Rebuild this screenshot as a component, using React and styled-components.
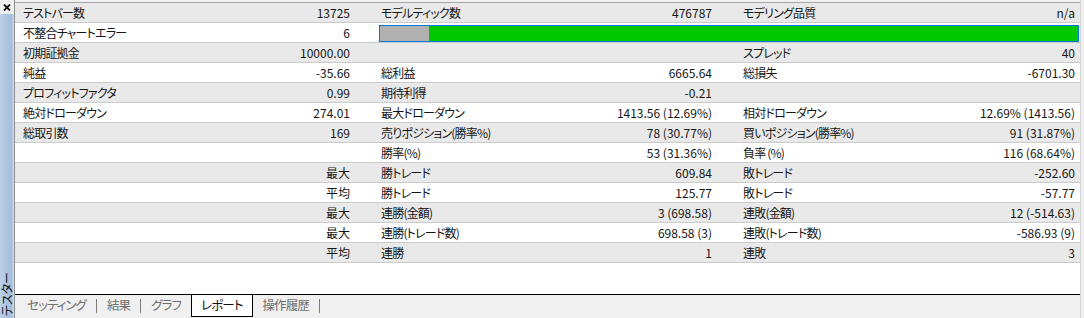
import React from 'react'
import styled, { createGlobalStyle } from 'styled-components'

const GlobalStyle = createGlobalStyle`
  html, body {
    margin: 0;
    padding: 0;
    background: #f0f0f0;
  }
  body {
    font-family: "Noto Sans CJK JP", "Noto Sans", sans-serif;
    font-size: 12px;
    color: #151515;
    font-feature-settings: "palt";
  }
`

const Frame = styled.div`
  display: flex;
  width: 1084px;
  height: 318px;
  overflow: hidden;
`

const Sidebar = styled.div`
  width: 15px;
  flex: none;
  display: flex;
  flex-direction: column;
  border-right: 1px solid #8c8c8c;
  box-sizing: border-box;
`

const CloseBox = styled.div`
  height: 14px;
  flex: none;
  display: flex;
  align-items: flex-start;
  padding: 4px 0 0 3px;
  box-sizing: border-box;
  background: #f0f0f0;
`

const SideStrip = styled.div`
  flex: 1;
  display: flex;
  flex-direction: column;
  justify-content: flex-end;
  align-items: center;
  background: linear-gradient(to right, #bcd0e8, #a3bddb 85%, #dbe6f2);
  padding-bottom: 2px;
`

const SideLabel = styled.span`
  writing-mode: vertical-rl;
  text-orientation: sideways;
  transform: rotate(180deg);
  font-size: 12px;
  line-height: 14px;
  color: #111;
`

const Main = styled.div`
  flex: none;
  width: 1066px;
  display: flex;
  flex-direction: column;
  padding-top: 2px;
  border-right: 1px solid #d6d6d6;
  box-sizing: border-box;
`

const Report = styled.div`
  flex: 1;
  background: #fff;
  border-top: 1px solid #a8a8a8;
`

const Row = styled.div`
  display: grid;
  grid-template-columns: 174px 169px 181px 181px 180px 180px;
  height: 19px;
  border-bottom: 1px solid #cbcbcb;
  background: ${p => (p.$shade ? '#e9e9e9' : '#fff')};
  line-height: 19px;
  white-space: nowrap;
`

const Label = styled.div`
  padding-left: ${p => p.$pad || 8}px;
  letter-spacing: -0.8px;
  overflow: hidden;
`

const Value = styled.div`
  text-align: right;
  padding-right: ${p => p.$pad || 8}px;
`

const Bar = styled.div`
  grid-column: 3 / 7;
  margin: 2px 1px 0 21px;
  height: 17px;
  border: 1px solid #0078d7;
  box-sizing: border-box;
  display: flex;
  background: #00c800;
`

const BarRest = styled.div`
  width: 49px;
  background: #b0b0b0;
`

const Tabs = styled.div`
  height: 23px;
  flex: none;
  border-top: 1px solid #000;
  display: flex;
  align-items: flex-start;
  padding-left: 2px;
  background: #f0f0f0;
`

const Tab = styled.div`
  padding: 0 9px;
  height: 21px;
  line-height: 20px;
  font-size: 12.5px;
  letter-spacing: -0.9px;
  color: ${p => (p.$active ? '#111' : '#6e6e6e')};
  background: ${p => (p.$active ? '#fff' : 'transparent')};
  border: 1px solid ${p => (p.$active ? '#000' : 'transparent')};
  border-top: none;
`

const Sep = styled.div`
  width: 1px;
  height: 14px;
  margin-top: 4px;
  background: #7a7a7a;
`

const rows = [
  ['テストバー数', '13725', 'モデルティック数', '476787', 'モデリング品質', 'n/a'],
  ['不整合チャートエラー', '6', 'BAR'],
  ['初期証拠金', '10000.00', '', '', 'スプレッド', '40'],
  ['純益', '-35.66', '総利益', '6665.64', '総損失', '-6701.30'],
  ['プロフィットファクタ', '0.99', '期待利得', '-0.21', '', ''],
  ['絶対ドローダウン', '274.01', '最大ドローダウン', '1413.56 (12.69%)', '相対ドローダウン', '12.69% (1413.56)'],
  ['総取引数', '169', '売りポジション(勝率%)', '78 (30.77%)', '買いポジション(勝率%)', '91 (31.87%)'],
  ['', '', '勝率(%)', '53 (31.36%)', '負率 (%)', '116 (68.64%)'],
  ['', '最大', '勝トレード', '609.84', '敗トレード', '-252.60'],
  ['', '平均', '勝トレード', '125.77', '敗トレード', '-57.77'],
  ['', '最大', '連勝(金額)', '3 (698.58)', '連敗(金額)', '12 (-514.63)'],
  ['', '最大', '連勝(トレード数)', '698.58 (3)', '連敗(トレード数)', '-586.93 (9)'],
  ['', '平均', '連勝', '1', '連敗', '3'],
]

const tabs = [
  { name: 'セッティング', sep: true },
  { name: '結果', sep: true },
  { name: 'グラフ' },
  { name: 'レポート', active: true },
  { name: '操作履歴', sep: true },
]

const CloseIcon = () => (
  <svg width="8" height="7" viewBox="0 0 8 7">
    <path d="M1 0.5 L7 6.5 M7 0.5 L1 6.5" stroke="#111" strokeWidth="1.8" />
  </svg>
)

const App = () => (
  <>
    <GlobalStyle />
    <Frame>
      <Sidebar>
        <CloseBox><CloseIcon /></CloseBox>
        <SideStrip>
          <SideLabel>テスター</SideLabel>
        </SideStrip>
      </Sidebar>
      <Main>
        <Report>
          {rows.map((r, i) => (
            <Row key={i} $shade={i % 2 === 0}>
              <Label>{r[0]}</Label>
              <Value>{r[1]}</Value>
              {r[2] === 'BAR' ? (
                <Bar><BarRest /></Bar>
              ) : (
                <>
                  <Label $pad={23}>{r[2]}</Label>
                  <Value>{r[3]}</Value>
                  <Label $pad={23}>{r[4]}</Label>
                  <Value $pad={5}>{r[5]}</Value>
                </>
              )}
            </Row>
          ))}
        </Report>
        <Tabs>
          {tabs.map(t => (
            <React.Fragment key={t.name}>
              <Tab $active={t.active}>{t.name}</Tab>
              {t.sep && <Sep />}
            </React.Fragment>
          ))}
        </Tabs>
      </Main>
    </Frame>
  </>
)

export default App
